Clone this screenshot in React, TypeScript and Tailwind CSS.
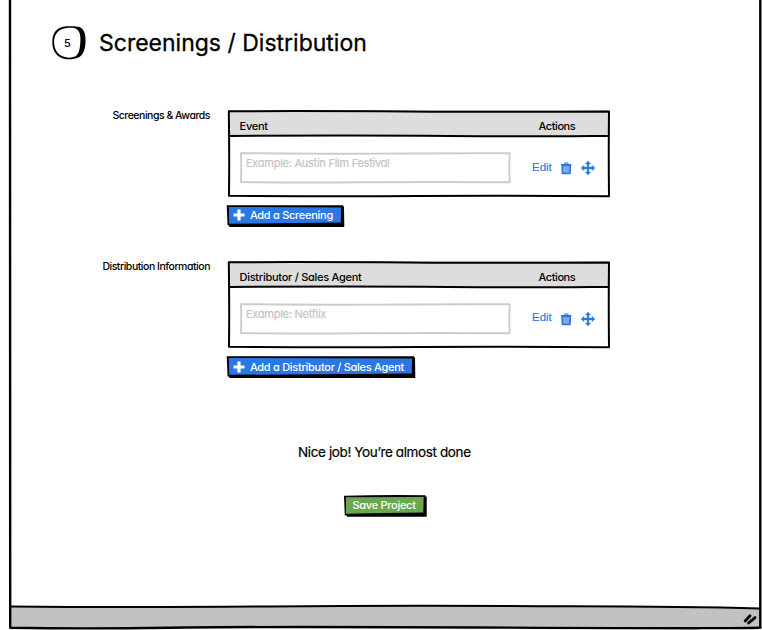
import React from 'react';

type OutlineProps = { w: number; h: number; d: string; color?: string; width?: number };

/** Hand-drawn strokes laid over a box of the given size. */
function Strokes({ w, h, d, color = '#000', width = 2 }: OutlineProps) {
  return (
    <svg
      className="pointer-events-none absolute left-0 top-0 overflow-visible"
      width={w}
      height={h}
      viewBox={`0 0 ${w} ${h}`}
      fill="none"
      stroke={color}
      strokeWidth={width}
      strokeLinejoin="round"
      strokeLinecap="round"
    >
      <path d={d} />
    </svg>
  );
}

function StepBadge({ n }: { n: string }) {
  return (
    <div className="relative flex h-[34px] w-[35px] items-center justify-center pr-[4px] text-[11px] font-medium">
      <svg className="absolute left-0 top-0" width="35" height="34" viewBox="0 0 35 34">
        <path d="M15 .3C20 0 25 .3 28 1.300C32.500 3.500 33.800 9 33.500 16C33.200 23 31.500 29 26.500 31.500C23 33.400 17 33.500 13 33C5 31.500 .6 25 .3 17C0 8 4 .6 15 .3Z" fill="#000" />
        <path d="M15 2C20 1.600 23.500 1.800 25.700 4C28.400 7 28.800 12 28.300 17C27.800 23 27 28 23.500 30.300C20 32 16 32 13 31C6 29.500 2.500 24 2.100 17C1.800 9 6 2.500 15 2Z" fill="#fff" />
      </svg>
      <span className="relative pt-[1px]">{n}</span>
    </div>
  );
}

function TrashIcon() {
  return (
    <svg width="12" height="13" viewBox="0 0 12 13" fill="none">
      <path d="M3.300 2.200L4 1H6.600L7.300 2.200" stroke="#2b78e4" strokeWidth="1.100" />
      <path d="M0 2.800H10.400" stroke="#2b78e4" strokeWidth="1.600" />
      <path d="M1.200 3.500H9.200L9 11.300H1.400Z" fill="#7fabee" stroke="#2b78e4" strokeWidth="1.700" strokeLinejoin="round" />
    </svg>
  );
}

function MoveIcon() {
  return (
    <svg width="14" height="14" viewBox="0 0 14 14" fill="#2b78e4">
      <path d="M7 0L9.600 3H7.900V6.100H11V4.400L14 7L11 9.600V7.900H7.900V11H9.600L7 14L4.400 11H6.100V7.900H3V9.600L0 7L3 4.400V6.100H6.100V3H4.400Z" stroke="#2b78e4" strokeWidth=".4" strokeLinejoin="round" />
    </svg>
  );
}

function PlusIcon() {
  return (
    <svg className="shrink-0" width="12" height="12" viewBox="0 0 12 12" stroke="#fff" strokeWidth="3.200">
      <path d="M6 .5V11.500M.5 6H11.500" />
    </svg>
  );
}

function BlueButton({ width, box, lift, children }: { width: number; box: string; lift: string; children: string }) {
  const w = width;
  return (
    <button className={`relative block h-[22px] text-left text-white ${box}`}>
      <svg className="absolute left-0 top-0 overflow-visible" width={w} height="22" viewBox={`0 0 ${w} 22`}>
        <path d={`M-.3 .2L${w - 1} .3V1.300H${w}L${w + 0.3} 22H2.500L2 20.500H.6Z`} fill="#000" />
        <path d={`M1.800 2L${w - 3} 2.500L${w - 3.200} 17.600L2.200 18.800Z`} fill="#2b78e4" />
      </svg>
      <span className={`relative flex items-center gap-[4.5px] pl-[6.4px] ${lift}`}>
        <PlusIcon />
        <span className="whitespace-nowrap text-[11px] leading-[20px] font-medium tracking-[-0.28px]">{children}</span>
      </span>
    </button>
  );
}

type EntryProps = {
  label: string;
  labelClass: string;
  heading: string;
  headingClass: string;
  placeholder: string;
  editClass: string;
};

function EntryRow(p: EntryProps) {
  return (
    <div className="flex">
      <div className={`w-[201px] whitespace-nowrap text-right text-[10.5px] leading-[12px] font-medium ${p.labelClass}`}>{p.label}</div>
      <div className="relative ml-[18px] h-[87px] w-[382px] bg-white">
        <div className="flex h-[26px] items-start bg-[#dddddd] pl-[11.5px] pt-[10px] text-[11px] leading-[13px] font-medium">
          <div className={`w-[299px] overflow-hidden whitespace-nowrap ${p.headingClass}`}>{p.heading}</div>
          <div className="tracking-[-0.42px]">Actions</div>
        </div>
        <div className="flex pl-[11.5px] pt-[16px]">
          <div className="relative h-[31px] w-[271px] pl-[6.5px] pt-[4px]">
            <div className="whitespace-nowrap text-[11px] leading-[14px] tracking-[-0.26px] text-[#c4c4c4] [-webkit-text-stroke:0.2px_#c4c4c4]">{p.placeholder}</div>
            <Strokes w={271} h={31} color="#cccccc" width={1.9} d="M1 1.200Q100 2 140 1.600T269.700 1.300Q269 15 269.700 30.200Q180 29.700 120 30.300T1 30Q1.500 15 1 1.200Z" />
          </div>
          <div className="flex items-start pl-[21.5px] text-[#2b78e4]">
            <span className={`w-[28.5px] font-['Liberation_Sans',Arial,sans-serif] text-[11.5px] leading-[14px] [-webkit-text-stroke:0.15px_#2b78e4] ${p.editClass}`}>Edit</span>
            <span className="mt-[10px] w-[20.5px]"><TrashIcon /></span>
            <span className="mt-[9px]"><MoveIcon /></span>
          </div>
        </div>
        <Strokes w={382} h={87} d="M.8 1.200Q100 .9 180 1.500T381 1.600Q380.500 40 381 86.200Q280 85.500 190 86T1 85.800Q1.500 45 .8 1.200ZM1 26Q120 25.200 220 26T381 25.800" />
      </div>
    </div>
  );
}

export default function App() {
  return (
    <div className="h-[630px] w-[762px] overflow-hidden bg-white pl-[9px] font-['Inter','Noto_Sans',sans-serif] text-black antialiased [font-feature-settings:'cv11','liga','calt']">
      <main className="relative flex h-[629px] w-[753px] flex-col">
        <div className="flex h-[605px] flex-col">
          <header className="flex items-center gap-[12px] pl-[43px] pt-[26px]">
            <StepBadge n="5" />
            <h1 className="whitespace-nowrap text-[23px] leading-[34px] [-webkit-text-stroke:0.3px_#000]">Screenings / Distribution</h1>
          </header>
          <section className="pt-[50px]">
            <EntryRow
              label="Screenings & Awards"
              labelClass="tracking-[-0.48px]"
              heading="Event"
              headingClass="tracking-[-0.25px]"
              placeholder="Example: Austin Film Festival"
              editClass="mt-[8px]"
            />
            <div className="pl-[218px] pt-[8px]">
              <BlueButton width={117} box="w-[117px]" lift="h-[20px] -mt-[2px]">Add a Screening</BlueButton>
            </div>
          </section>
          <section className="pt-[34px]">
            <EntryRow
              label="Distribution Information"
              labelClass="tracking-[-0.47px]"
              heading="Distributor / Sales Agent"
              headingClass="h-[12px] tracking-[-0.27px]"
              placeholder="Example: Netflix"
              editClass="mt-[7px]"
            />
            <div className="pl-[218px] pt-[8px]">
              <BlueButton width={188} box="w-[188px]" lift="h-[20px]">Add a Distributor / Sales Agent</BlueButton>
            </div>
          </section>
          <section className="pt-[64px]">
            <p className="whitespace-nowrap pl-[289px] text-[13.5px] leading-[20px] tracking-[-0.38px] [-webkit-text-stroke:0.2px_#000]">Nice job! You’re almost done</p>
            <div className="pl-[335px] pt-[33px]">
              <button className="relative block h-[22px] w-[83px] pl-[8.5px] text-left text-white">
                <svg className="absolute left-0 top-0 overflow-visible" width="83" height="22" viewBox="0 0 83 22">
                  <path d="M0 .8Q40 -.3 81.500 .3V1.500H82.700V21.800H3V20.500H.8Z" fill="#000" />
                  <path d="M2 2.300L79.700 2L79.300 17.600L40 18.100L1.800 18.800Z" fill="#6aa84f" />
                </svg>
                <span className="relative -mt-[2px] block whitespace-nowrap text-[11px] leading-[20px] font-medium tracking-[-0.28px]">Save Project</span>
              </button>
            </div>
          </section>
        </div>
        <footer className="relative h-[24px] w-[752px]">
          <svg className="absolute left-0 top-0 overflow-visible" width="753" height="24" viewBox="0 0 753 24">
            <path d="M1 1Q200 2 420 1T751 3.500V23Q350 22 1 23.500Z" fill="#c2c2c2" />
            <path d="M1 1.400Q120 2.500 260 1.400T560 1.300Q680 1.500 751 3.600" fill="none" stroke="#000" strokeWidth="2" />
            <path d="M736.200 16L741 10.800M739.600 18L746 12.600" stroke="#000" strokeWidth="2.900" strokeLinecap="round" />
          </svg>
        </footer>
        <Strokes w={753} h={629} width={2.4} d="M1 -2Q.6 300 1.200 627.800Q80 629 160 627.700T500 627.600T751.300 627.500Q750.500 300 751.300 -2" />
      </main>
    </div>
  );
}
